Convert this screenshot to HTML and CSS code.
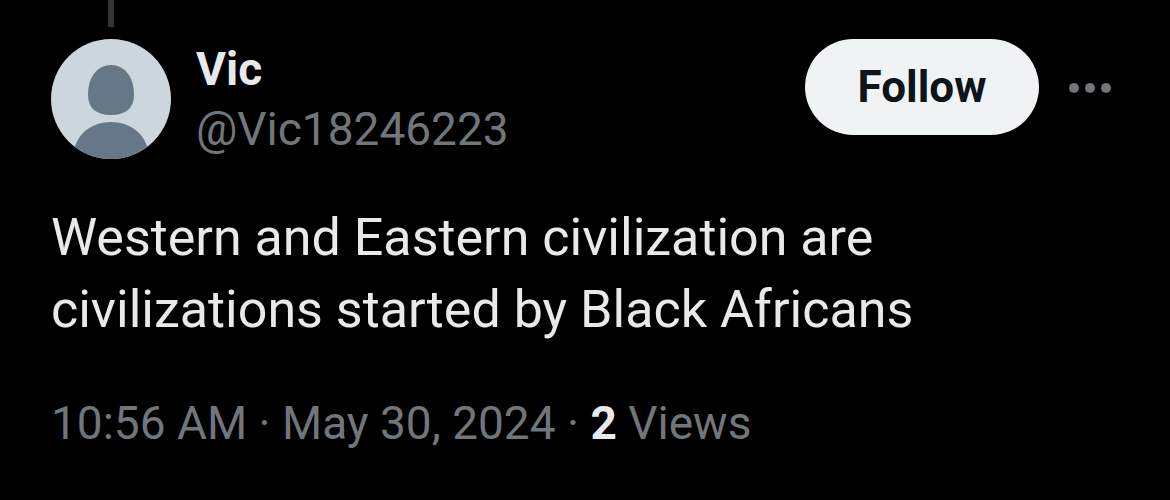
FILE: index.html
```html
<!DOCTYPE html>
<html lang="en">
<head>
<meta charset="utf-8">
<meta name="viewport" content="width=device-width, initial-scale=1">
<title>Post by Vic</title>
<link rel="stylesheet" href="styles.css">
</head>
<body>
<article class="post">
  <div class="thread-line"></div>
  <header class="author">
    <svg class="avatar" viewBox="0 0 120 120" aria-hidden="true">
      <defs><clipPath id="disc"><circle cx="60" cy="60" r="60"/></clipPath></defs>
      <g clip-path="url(#disc)">
        <rect width="120" height="120" fill="#ccd6dd"/>
        <path fill="#667787" d="M60 26C73 26 83 37 83 56C83 69 75 76 60 76C45 76 37 69 37 56C37 37 47 26 60 26Z"/>
        <path fill="#667787" d="M22 120C22 98 38 83 60 83C82 83 98 98 98 120Z"/>
      </g>
    </svg>
    <div class="names">
      <span class="name">Vic</span>
      <span class="handle">@Vic18246223</span>
    </div>
    <button class="follow" type="button">Follow</button>
    <button class="more" type="button" aria-label="More">
      <svg class="dots" viewBox="0 0 44 12" aria-hidden="true"><circle cx="6" cy="6" r="5"/><circle cx="22" cy="6" r="5"/><circle cx="38" cy="6" r="5"/></svg>
    </button>
  </header>
  <p class="text">Western and Eastern civilization are civilizations started by Black Africans</p>
  <footer class="meta"><time datetime="2024-05-30T10:56">10:56 AM · May 30, 2024</time> · <strong class="count">2</strong> Views</footer>
</article>
</body>
</html>
```
FILE: styles.css
```css
body {
  margin: 0;
  background: #000;
  color: #e7e9ea;
  font-family: Roboto, "Liberation Sans", sans-serif;
}

.post {
  padding: 0 58px 46px 51px;
}

.thread-line {
  width: 6px;
  height: 27px;
  margin-left: 57px;
  background: #333639;
}

.author {
  display: flex;
  align-items: flex-start;
  margin-top: 12px;
}

.avatar {
  flex: none;
  width: 120px;
  height: 120px;
}

.names {
  display: flex;
  flex: 1;
  flex-direction: column;
  margin-left: 25px;
  font-size: 46px;
  line-height: 60px;
}

.name {
  font-weight: 700;
}

.handle {
  color: #71767b;
}

.follow {
  width: 234px;
  height: 96px;
  padding: 0;
  border: 0;
  border-radius: 48px;
  background: #eff3f4;
  color: #0f1419;
  font: 700 44px/96px Roboto, "Liberation Sans", sans-serif;
}

.more {
  display: flex;
  align-items: center;
  height: 98px;
  margin-left: 29px;
  padding: 0;
  border: 0;
  background: none;
}

.dots {
  width: 44px;
  height: 12px;
  fill: #71767b;
}

.text {
  max-width: 960px;
  margin: 43px 0 0;
  font-size: 52px;
  line-height: 72px;
}

.meta {
  margin-top: 47px;
  color: #71767b;
  font-size: 46px;
  line-height: 60px;
}

.count {
  color: #e7e9ea;
  font-weight: 700;
}
```
